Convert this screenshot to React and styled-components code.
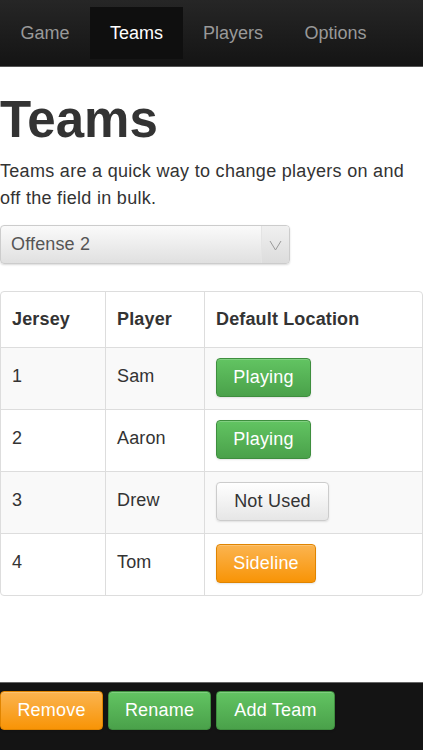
import React from 'react'
import styled, { createGlobalStyle, css } from 'styled-components'

const Global = createGlobalStyle`
  html, body {
    margin: 0;
    padding: 0;
    background: #fff;
  }
  body {
    font-family: 'Liberation Sans', Arial, sans-serif;
    color: #333;
  }
`

const Page = styled.div`
  width: 423px;
  height: 750px;
  display: flex;
  flex-direction: column;
  overflow: hidden;
`

const NavBar = styled.div`
  height: 67px;
  flex-shrink: 0;
  display: flex;
  align-items: stretch;
  padding: 7px 0 7px 0;
  box-sizing: border-box;
  background: linear-gradient(#262626, #141414);
  border-bottom: 1px solid #555;
`

const Tab = styled.div`
  display: flex;
  align-items: center;
  justify-content: center;
  padding: 0 20px;
  font-size: 18px;
  color: ${p => (p.$active ? '#fff' : '#999')};
  background: ${p => (p.$active ? '#0f0f0f' : 'transparent')};
  min-width: ${p => p.$w}px;
  box-sizing: border-box;
`

const Content = styled.div`
  flex: 1;
  padding-top: 24px;
`

const Title = styled.h1`
  margin: 0;
  font-size: 51px;
  font-weight: bold;
  line-height: 58px;
  color: #333;
`

const Lead = styled.p`
  margin: 9px 0 0;
  font-size: 18px;
  letter-spacing: 0.3px;
  line-height: 27px;
  color: #333;
`

const Select = styled.div`
  margin-top: 13px;
  width: 290px;
  height: 39px;
  box-sizing: border-box;
  display: flex;
  border: 1px solid #ccc;
  border-radius: 4px;
  background: linear-gradient(#fafafa, #e0e0e0);
  box-shadow: 0 1px 2px rgba(0,0,0,0.15);
  overflow: hidden;

  span {
    flex: 1;
    display: flex;
    align-items: center;
    padding-left: 10px;
    font-size: 18px;
    letter-spacing: 0.15px;
    color: #555;
  }
`

const Arrow = styled.div`
  width: 27px;
  display: flex;
  align-items: center;
  justify-content: center;
  background: linear-gradient(#f0f0f0, #dcdcdc);
  border-left: 1px solid #e4e4e4;
`

const Table = styled.table`
  margin-top: 27px;
  width: 423px;
  border-collapse: separate;
  border-spacing: 0;
  border: 1px solid #ddd;
  border-radius: 4px;
  font-size: 18px;
  letter-spacing: 0.15px;

  th, td {
    text-align: left;
    padding: 0 11px;
    border-left: 1px solid #ddd;
    border-top: 1px solid #ddd;
  }
  th:first-child, td:first-child { border-left: none; }
  thead th { border-top: none; height: 55px; font-weight: bold; color: #333; }
  tbody td { height: 62px; color: #333; vertical-align: top; padding-top: 18px; box-sizing: border-box; }
  tbody tr:nth-child(odd) td { background: #f9f9f9; }
  tbody td:last-child { padding-top: 10px; }
`

const colors = {
  green: css`
    background: linear-gradient(#62c462, #4aa14a);
    border: 1px solid #3e8e3e;
    color: #fff;
  `,
  orange: css`
    background: linear-gradient(#fbb450, #f89406);
    border: 1px solid #e08400;
    color: #fff;
  `,
  plain: css`
    background: linear-gradient(#ffffff, #e6e6e6);
    border: 1px solid #ccc;
    color: #333;
  `
}

const Button = styled.div`
  display: inline-flex;
  align-items: center;
  justify-content: center;
  height: 39px;
  width: ${p => p.$w}px;
  box-sizing: border-box;
  border-radius: 4px;
  font-size: 18px;
  letter-spacing: 0.2px;
  box-shadow: inset 0 1px 0 rgba(255,255,255,0.2), 0 1px 2px rgba(0,0,0,0.1);
  ${p => colors[p.$kind]}
`

const BottomBar = styled.div`
  height: 68px;
  flex-shrink: 0;
  display: flex;
  gap: 5px;
  padding-top: 8px;
  box-sizing: border-box;
  background: #141414;
  border-top: 1px solid #666;
  align-items: flex-start;
`

const rows = [
  ['1', 'Sam', 'green', 'Playing', 95],
  ['2', 'Aaron', 'green', 'Playing', 95],
  ['3', 'Drew', 'plain', 'Not Used', 113],
  ['4', 'Tom', 'orange', 'Sideline', 100]
]

export default function App () {
  return (
    <Page>
      <Global />
      <NavBar>
        <Tab $w={90}>Game</Tab>
        <Tab $w={93} $active>Teams</Tab>
        <Tab $w={100}>Players</Tab>
        <Tab $w={105}>Options</Tab>
      </NavBar>
      <Content>
        <Title>Teams</Title>
        <Lead>Teams are a quick way to change players on and off the field in bulk.</Lead>
        <Select>
          <span>Offense 2</span>
          <Arrow>
            <svg width='13' height='12' viewBox='0 0 13 12'>
              <path d='M1 2 L6.5 11 L12 2' fill='none' stroke='#999' strokeWidth='1' />
            </svg>
          </Arrow>
        </Select>
        <Table>
          <colgroup>
            <col style={{ width: 104 }} />
            <col style={{ width: 99 }} />
            <col />
          </colgroup>
          <thead>
            <tr>
              <th>Jersey</th>
              <th>Player</th>
              <th>Default Location</th>
            </tr>
          </thead>
          <tbody>
            {rows.map(r => (
              <tr key={r[0]}>
                <td>{r[0]}</td>
                <td>{r[1]}</td>
                <td><Button $kind={r[2]} $w={r[4]}>{r[3]}</Button></td>
              </tr>
            ))}
          </tbody>
        </Table>
      </Content>
      <BottomBar>
        <Button $kind='orange' $w={103}>Remove</Button>
        <Button $kind='green' $w={103}>Rename</Button>
        <Button $kind='green' $w={119}>Add Team</Button>
      </BottomBar>
    </Page>
  )
}
